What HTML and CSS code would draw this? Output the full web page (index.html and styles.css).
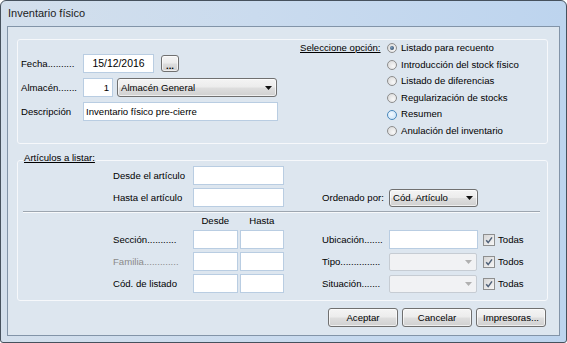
FILE: index.html
```html
<!DOCTYPE html>
<html lang="es">
<head>
    <meta charset="UTF-8">
    <title>Inventario físico</title>
    <link rel="stylesheet" href="styles.css">
</head>
<body>

<div class="window">
    <div class="titlebar">Inventario físico</div>

    <div class="client">

        <!-- Datos generales + opción -->
        <div class="group group-main">
            <div class="general">
                <span class="lbl">Fecha..........</span>
                <div class="ctrl">
                    <div class="field field-date">15/12/2016</div>
                    <div class="btn btn-dots">...</div>
                </div>

                <span class="lbl">Almacén.......</span>
                <div class="ctrl">
                    <div class="field field-code">1</div>
                    <div class="combo combo-store">
                        <span>Almacén General</span>
                        <svg class="arrow" viewBox="0 0 7 4"><polygon points="0,0 7,0 3.5,4" fill="#111"/></svg>
                    </div>
                </div>

                <span class="lbl">Descripción</span>
                <div class="ctrl">
                    <div class="field field-desc">Inventario físico pre-cierre</div>
                </div>
            </div>

            <div class="options">
                <span class="opt-title">Seleccione opción:</span>
                <ul class="radios">
                    <li><span class="radio checked"></span>Listado para recuento</li>
                    <li><span class="radio"></span>Introducción del stock físico</li>
                    <li><span class="radio"></span>Listado de diferencias</li>
                    <li><span class="radio"></span>Regularización de stocks</li>
                    <li><span class="radio hot"></span>Resumen</li>
                    <li><span class="radio"></span>Anulación del inventario</li>
                </ul>
            </div>
        </div>

        <!-- Artículos a listar -->
        <fieldset class="group group-list">
            <legend>Artículos a listar:</legend>

            <div class="range">
                <span class="lbl">Desde el artículo</span>
                <div class="field"></div>

                <span class="lbl first">Hasta el artículo</span>
                <div class="field"></div>
                <span class="lbl c4">Ordenado por:</span>
                <div class="combo combo-sort">
                    <span>Cód. Artículo</span>
                    <svg class="arrow" viewBox="0 0 7 4"><polygon points="0,0 7,0 3.5,4" fill="#111"/></svg>
                </div>
            </div>

            <div class="separator"></div>

            <div class="filters">
                <div class="heads"><span>Desde</span><span>Hasta</span></div>

                <span class="lbl first">Sección...........</span>
                <div class="pair"><div class="field"></div><div class="field"></div></div>
                <span class="lbl c4">Ubicación.......</span>
                <div class="field"></div>
                <label class="todos">
                    <span class="check"><svg viewBox="0 0 10 10"><path d="M2.2 5.2 L4.2 7.6 L8 2.4" fill="none" stroke="#4f6179" stroke-width="1.5"/></svg></span>Todas
                </label>

                <span class="lbl first lbl-off">Familia.............</span>
                <div class="pair"><div class="field"></div><div class="field"></div></div>
                <span class="lbl c4">Tipo...............</span>
                <div class="combo combo-off">
                    <svg class="arrow" viewBox="0 0 7 4"><polygon points="0,0 7,0 3.5,4" fill="#b0b0b0"/></svg>
                </div>
                <label class="todos">
                    <span class="check"><svg viewBox="0 0 10 10"><path d="M2.2 5.2 L4.2 7.6 L8 2.4" fill="none" stroke="#4f6179" stroke-width="1.5"/></svg></span>Todos
                </label>

                <span class="lbl first">Cód. de listado</span>
                <div class="pair"><div class="field"></div><div class="field"></div></div>
                <span class="lbl c4">Situación.......</span>
                <div class="combo combo-off">
                    <svg class="arrow" viewBox="0 0 7 4"><polygon points="0,0 7,0 3.5,4" fill="#b0b0b0"/></svg>
                </div>
                <label class="todos">
                    <span class="check"><svg viewBox="0 0 10 10"><path d="M2.2 5.2 L4.2 7.6 L8 2.4" fill="none" stroke="#4f6179" stroke-width="1.5"/></svg></span>Todas
                </label>
            </div>
        </fieldset>

        <!-- Botones -->
        <div class="actions">
            <div class="btn">Aceptar</div>
            <div class="btn">Cancelar</div>
            <div class="btn">Impresoras...</div>
        </div>

    </div>
</div>

</body>
</html>
```

FILE: styles.css
```css
* {
    box-sizing: border-box;
}

body {
    margin: 0;
    font-family: "Liberation Sans", Arial, sans-serif;
    font-size: 9.6px;
    color: #000;
}

/* Window frame */
.window {
    width: 567px;
    height: 343px;
    display: flex;
    flex-direction: column;
    padding: 0 6px 6px;
    border: 1px solid #46515d;
    border-radius: 6px 6px 3px 3px;
    background: linear-gradient(to right, #d3dfec 0%, #cadbee 45%, #bdd4ee 100%);
}

.titlebar {
    height: 25px;
    padding-left: 1px;
    font-size: 11px;
    line-height: 24px;
    color: #1c1c1c;
}

.client {
    flex: 1;
    padding: 12px 11px 0 9px;
    border: 1px solid #8294a8;
    background: #dde6ef;
}

/* Group boxes */
.group {
    border: 1px solid #f6f8fb;
    border-radius: 3px;
}

.group-main {
    display: flex;
    height: 105px;
}

.general {
    width: 260px;
    display: grid;
    grid-template-columns: 62px auto;
    grid-auto-rows: 19px;
    row-gap: 5px;
    align-items: center;
    align-content: start;
    padding: 14px 0 0 3px;
}

.ctrl {
    display: flex;
    align-items: center;
}

.lbl {
    white-space: nowrap;
}

.lbl-off {
    color: #8a8a8a;
}

/* Text boxes */
.field {
    height: 19px;
    padding: 0 3px;
    border: 1px solid #b9cde2;
    background: #fff;
    line-height: 17px;
    white-space: nowrap;
    overflow: hidden;
}

.field-date {
    width: 71px;
    text-align: center;
    font-size: 10.4px;
}

.field-code {
    width: 30px;
    text-align: right;
}

.field-desc {
    width: 195px;
    padding-left: 2px;
}

/* Buttons and combos */
.btn,
.combo {
    border: 1px solid #707070;
    border-radius: 3px;
    background: linear-gradient(#f4f4f4 0%, #ececec 48%, #dedede 52%, #d0d0d0 100%);
    box-shadow: inset 0 0 0 1px rgba(255, 255, 255, 0.65);
}

.btn {
    display: flex;
    align-items: center;
    justify-content: center;
}

.btn-dots {
    width: 18px;
    height: 17px;
    margin-left: 7px;
    padding-top: 3px;
    font-weight: bold;
}

.combo {
    display: flex;
    align-items: center;
    justify-content: space-between;
    height: 19px;
    padding: 0 4px 0 3px;
    white-space: nowrap;
}

.combo .arrow {
    width: 7px;
    height: 4px;
}

.combo-store {
    width: 160px;
    margin-left: 4px;
}

.combo-sort {
    width: 89px;
    height: 18px;
}

.combo-off {
    width: 88px;
    height: 18px;
    justify-content: flex-end;
    border-color: #c6ccd3;
    border-radius: 2px;
    background: #f1f2f4;
    box-shadow: none;
}

/* Option list */
.options {
    display: grid;
    grid-template-columns: 87px auto;
    align-content: start;
    margin-left: 22px;
    line-height: 16.6px;
}

.opt-title {
    text-decoration: underline;
}

.radios {
    list-style: none;
    margin: 0;
    padding: 0;
}

.radios li {
    display: flex;
    align-items: center;
    gap: 4px;
    height: 16.6px;
    white-space: nowrap;
}

.radio {
    width: 10px;
    height: 10px;
    padding: 2px;
    border: 1px solid #8d8d8d;
    border-radius: 50%;
    background: radial-gradient(circle at 65% 65%, #f8f8f8, #d6d6d6);
}

.radio.checked::after {
    content: "";
    display: block;
    width: 4px;
    height: 4px;
    border-radius: 50%;
    background: radial-gradient(circle at 40% 40%, #7c9cbd, #1b3550);
}

.radio.hot {
    border-color: #4a88bb;
    background: radial-gradient(circle at 40% 40%, #f2f9ff, #c4dff6);
}

/* Artículos a listar */
.group-list {
    margin: 10px 0 0;
    padding: 0 0 7px;
    min-width: 0;
}

.group-list legend {
    margin-left: 5px;
    padding: 0 1px 5px;
    line-height: 7px;
    text-decoration: underline;
}

.range,
.filters {
    display: grid;
    row-gap: 3px;
    align-items: center;
    padding-left: 95px;
}

.range {
    grid-template-columns: 80px 91px 38px 67px 89px;
    grid-auto-rows: 19px;
}

.filters {
    grid-template-columns: 80px 91px 38px 67px 89px auto;
    grid-template-rows: 14px 19px 19px 19px;
}

.first {
    grid-column: 1;
}

.c4 {
    grid-column: 4;
}

.separator {
    margin: 4px 7px 0 5px;
    border-top: 1px solid #9da6b0;
    border-bottom: 1px solid #f7f9fb;
}

.heads {
    grid-column: 2;
    display: flex;
    gap: 2px;
}

.heads span {
    flex: 1;
    text-align: center;
}

.pair {
    display: flex;
    gap: 2px;
}

.pair .field {
    flex: 1;
}

.todos {
    display: flex;
    align-items: center;
    gap: 3px;
    margin-left: 5px;
    white-space: nowrap;
}

.check {
    width: 12px;
    height: 12px;
    display: flex;
    border: 1px solid #8e8f8f;
    background: linear-gradient(135deg, #d6d6d6, #f6f6f6);
}

.check svg {
    width: 10px;
    height: 10px;
}

/* Bottom buttons */
.actions {
    display: flex;
    justify-content: flex-end;
    gap: 4px;
    margin: 7px 2px 0 0;
}

.actions .btn {
    width: 70px;
    height: 19px;
}
```
